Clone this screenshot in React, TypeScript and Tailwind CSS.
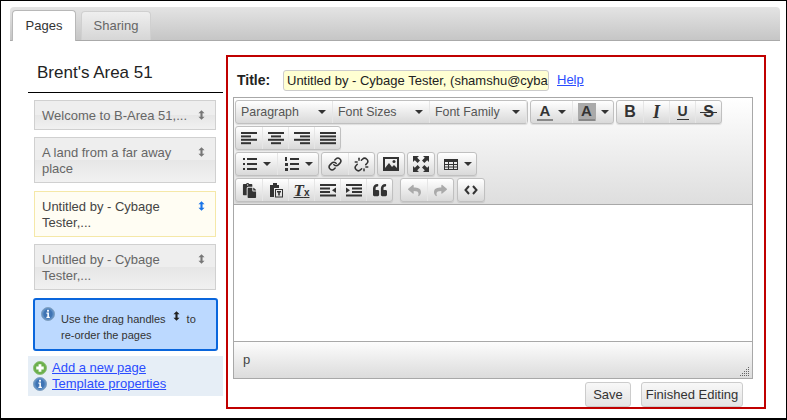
import React from "react";
import { FaPaste, FaQuoteLeft, FaReply, FaShare } from "react-icons/fa";
import { Link, Unlink } from "lucide-react";

const Handle = ({ color = "#777" }: { color?: string }) => (
  <svg width="7" height="10" viewBox="0 0 8 11" className="shrink-0">
    <path d="M4 0 L7.5 3.5 H5.2 V7.5 H7.5 L4 11 L0.5 7.5 H2.8 V3.5 H0.5 Z" fill={color} />
  </svg>
);

const Info = () => (
  <svg width="14" height="14" viewBox="0 0 15 15" className="shrink-0">
    <circle cx="7.5" cy="7.5" r="7" fill="#5f8fc4" stroke="#7f9fc0" />
    <circle cx="7.5" cy="7.5" r="5" fill="#3f74b4" />
    <rect x="6.5" y="3" width="2" height="2" fill="#fff" />
    <path d="M5.8 6 H8.5 V10.5 H9.5 V11.8 H5.8 V10.5 H6.8 V7.2 H5.8 Z" fill="#fff" />
  </svg>
);

const Add = () => (
  <svg width="14" height="14" viewBox="0 0 15 15" className="shrink-0">
    <circle cx="7.5" cy="7.5" r="7" fill="#6cb04c" stroke="#8fbf7a" />
    <path d="M6 3.5 H9 V6 H11.5 V9 H9 V11.5 H6 V9 H3.5 V6 H6 Z" fill="#fff" />
  </svg>
);

const Caret = () => (
  <svg width="8" height="4" viewBox="0 0 8 4" className="shrink-0">
    <path d="M0 0 H8 L4 4 Z" fill="#333" />
  </svg>
);

const I = ({ children }: { children: React.ReactNode }) => (
  <svg width="16" height="16" viewBox="0 0 16 16" fill="#333">{children}</svg>
);

const lines = (w: number[], align: "l" | "c" | "r") =>
  w.map((x, i) => (
    <rect key={i} x={align === "l" ? 0 : align === "r" ? 16 - x : (16 - x) / 2} y={2 + i * 3.4} width={x} height="2" />
  ));

const AlignL = () => <I>{lines([16, 10, 16, 10], "l")}</I>;
const AlignC = () => <I>{lines([16, 10, 16, 10], "c")}</I>;
const AlignR = () => <I>{lines([16, 10, 16, 10], "r")}</I>;
const AlignJ = () => <I>{lines([16, 16, 16, 16], "l")}</I>;

const Bullet = () => (
  <I>
    {[3, 8, 13].map((y) => (
      <g key={y}>
        <rect x="1" y={y - 1} width="2" height="2" />
        <rect x="5" y={y - 1} width="10" height="2" />
      </g>
    ))}
  </I>
);
const NumList = () => (
  <I>
    <rect x="1" y="1" width="2" height="4" />
    <rect x="1" y="7" width="3" height="3" />
    <rect x="1" y="12" width="3" height="3" />
    {[3, 8, 13].map((y) => (
      <rect key={y} x="6" y={y - 1} width="9" height="2" />
    ))}
  </I>
);
const Picture = () => (
  <I>
    <path fillRule="evenodd" d="M0 1 H16 V15 H0 Z M2 3 V12 L6 7 L9 11 L11 9 L14 12 V3 Z" />
    <circle cx="11" cy="5.5" r="1.5" />
  </I>
);
const Fullscreen = () => (
  <I>
    <path d="M0 0 H6 L4.2 1.8 L7 4.6 L4.6 7 L1.8 4.2 L0 6 Z" />
    <path d="M16 0 V6 L14.2 4.2 L11.4 7 L9 4.6 L11.8 1.8 L10 0 Z" />
    <path d="M0 16 V10 L1.8 11.8 L4.6 9 L7 11.4 L4.2 14.2 L6 16 Z" />
    <path d="M16 16 H10 L11.8 14.2 L9 11.4 L11.4 9 L14.2 11.8 L16 10 Z" />
  </I>
);
const TableI = () => (
  <I>
    <path fillRule="evenodd" d="M1 3 H15 V14 H1 Z M2 6 V8 H5 V6 Z M6 6 V8 H10 V6 Z M11 6 V8 H14 V6 Z M2 9 V10.5 H5 V9 Z M6 9 V10.5 H10 V9 Z M11 9 V10.5 H14 V9 Z M2 11.5 V13 H5 V11.5 Z M6 11.5 V13 H10 V11.5 Z M11 11.5 V13 H14 V11.5 Z" />
  </I>
);
const PasteText = () => (
  <I>
    <path d="M2 3 H5 V1 H9 V3 H11 V6 H6 V15 H2 Z" />
    <path fillRule="evenodd" d="M7 7 H15 V15.5 H7 Z M8 8 V14.5 H14 V8 Z" />
    <path d="M9 9 H13 V10.5 H11.8 V13.5 H10.2 V10.5 H9 Z" />
  </I>
);
const Outdent = () => (
  <I>
    <rect x="0" y="2" width="16" height="2" />
    <rect x="0" y="5.5" width="10" height="2" />
    <rect x="0" y="9" width="10" height="2" />
    <rect x="0" y="12.5" width="16" height="2" />
    <path d="M16 5.5 V11 L12 8.2 Z" />
  </I>
);
const Indent = () => (
  <I>
    <rect x="0" y="2" width="16" height="2" />
    <rect x="6" y="5.5" width="10" height="2" />
    <rect x="6" y="9" width="10" height="2" />
    <rect x="0" y="12.5" width="16" height="2" />
    <path d="M0 5.5 V11 L4 8.2 Z" />
  </I>
);
const CodeI = () => (
  <svg width="14" height="14" viewBox="0 0 14 14" fill="none" stroke="#333" strokeWidth="2">
    <path d="M5 3 L1.5 7 L5 11" />
    <path d="M9 3 L12.5 7 L9 11" />
  </svg>
);

const Btn = ({ children, first, w = "w-[26px]" }: { children: React.ReactNode; first?: boolean; w?: string }) => (
  <div className={`flex h-full ${w} items-center justify-center gap-[5px] ${first ? "" : "border-l border-[#e6e6e6]"}`}>{children}</div>
);

const Group = ({ children, className = "" }: { children: React.ReactNode; className?: string }) => (
  <div className={`flex h-[24px] rounded-[3px] border border-[#c0c0c0] bg-linear-to-b from-[#ffffff] to-[#d9d9d9] shadow-[0_1px_1px_rgba(0,0,0,0.1)] ${className}`}>
    {children}
  </div>
);

const Select = ({ label, w }: { label: string; w: string }) => (
  <div className={`flex h-full ${w} items-center justify-between border-r border-[#e6e6e6] pl-[5px] pr-[6px] text-[12.4px] text-[#555]`}>
    <span className="whitespace-nowrap">{label}</span>
    <Caret />
  </div>
);

const Letter = ({ children, className = "" }: { children: React.ReactNode; className?: string }) => (
  <span className={`text-[16px] leading-none font-bold text-[#333] ${className}`}>{children}</span>
);

const Item = ({ text, active }: { text: string; active?: boolean }) => (
  <div
    className={`flex justify-between border pt-[7px] pb-[5px] pl-[7px] pr-[10px] text-[13px] leading-[16px] ${
      active
        ? "border-[#f5e8a8] bg-[#fffdf3] text-[#444]"
        : "border-[#d0d0d0] bg-[linear-gradient(#eeeeee_50%,#e6e6e6_50%,#f1f1f1)] text-[#666]"
    }`}
  >
    <span className="w-[150px]">{text}</span>
    <span className="pt-[2px]">
      <Handle color={active ? "#1a75e8" : "#777"} />
    </span>
  </div>
);

export default function App() {
  return (
    <div className="h-[420px] w-[787px] overflow-hidden border border-b-2 border-black bg-white font-['Liberation_Sans',Arial,sans-serif]">
      <div className="ml-[9px] mt-[6px] flex h-[34px] w-[770px] items-end gap-[5px] rounded-t-[4px] border-b border-[#aaa] bg-linear-to-b from-[#e4e4e4] to-[#c6c6c6] pl-[2px]">
        <div className="-mb-px flex h-[31px] w-[64px] items-center justify-center rounded-t-[4px] border border-b-0 border-[#b8b8b8] bg-white text-[13px] text-[#333]">
          Pages
        </div>
        <div className="flex h-[29px] w-[70px] items-center justify-center rounded-t-[4px] border border-b-0 border-[#d0d0d0] bg-linear-to-b from-[#efefef] to-[#d6d6d6] text-[13px] text-[#666]">
          Sharing
        </div>
      </div>

      <div className="ml-[27px] mt-[15px] flex items-start gap-[3px]">
        <div className="w-[195px]">
          <div className="h-[37px] border-b border-black pl-[9px] pt-[6px] text-[17px] leading-[22px] text-[#222]">Brent's Area 51</div>
          <div className="ml-[6px] mt-[7px] flex w-[182px] flex-col gap-[7.33px]">
            <Item text="Welcome to B-Area 51,..." />
            <Item text="A land from a far away place" />
            <Item text="Untitled by - Cybage Tester,..." active />
            <Item text="Untitled by - Cybage Tester,..." />
          </div>
          <div className="ml-[5px] mt-[8px] flex h-[53px] w-[185px] gap-[6px] rounded-[3px] border-2 border-[#0a66dc] bg-[#bcd9ff] pl-[6px] pt-[7px] text-[11px] text-[#333]">
            <Info />
            <div className="pt-[4px] leading-[16px]">
              <div className="flex items-center">
                <span>Use the drag handles</span>
                <span className="mx-[7px] -mt-[5px]"><Handle color="#222" /></span>
                <span>to</span>
              </div>
              <div>re-order the pages</div>
            </div>
          </div>
          <div className="mt-[5px] flex h-[40px] flex-col justify-center bg-[#e6eef6] pl-[5px] text-[13px] leading-[16px] text-[#2a4cff]">
            <div className="flex items-center gap-[5px]"><Add /><span className="underline">Add a new page</span></div>
            <div className="flex items-center gap-[5px]"><Info /><span className="underline">Template properties</span></div>
          </div>
        </div>

        <div className="-mt-[1px] h-[354px] w-[540px] border-2 border-[#c00000] pl-[5px] pr-[11px] pt-[12px]">
          <div className="flex h-[22px] items-center">
            <span className="ml-[4px] w-[46px] text-[14px] font-bold text-[#222]">Title:</span>
            <div className="h-[21px] w-[266px] overflow-hidden whitespace-nowrap rounded-[3px] border border-[#ccc] bg-[#ffffd2] pl-[3px] text-[13px] leading-[19px] text-[#222]">
              Untitled by - Cybage Tester, (shamshu@cyba
            </div>
            <span className="ml-[8px] text-[13px] text-[#2a4cff] underline">Help</span>
          </div>

          <div className="mt-[6px] w-[520px] border border-[#a8a8a8]">
            <div className="flex h-[107px] flex-col gap-[2px] border-b border-[#a8a8a8] bg-linear-to-b from-[#ffffff] to-[#dedede] pl-[1px] pt-[2px]">
              <div className="flex gap-[2px]">
                <Group>
                  <Select label="Paragraph" w="w-[97px]" />
                  <Select label="Font Sizes" w="w-[97px]" />
                  <Select label="Font Family" w="w-[97px]" />
                </Group>
                <Group>
                  <Btn first w="w-[41px]">
                    <span className="flex flex-col items-center">
                      <span className="text-[15px] leading-none font-bold text-[#333]">A</span>
                      <span className="mt-[1px] h-[2px] w-[16px] bg-[#888]" />
                    </span>
                    <Caret />
                  </Btn>
                  <Btn w="w-[41px]">
                    <span className="flex flex-col items-center bg-[#aaa] px-[1px]">
                      <span className="text-[15px] leading-none font-bold text-[#333]">A</span>
                      <span className="mt-[1px] h-[2px] w-[16px] bg-[#888]" />
                    </span>
                    <Caret />
                  </Btn>
                </Group>
                <Group>
                  <Btn first><Letter>B</Letter></Btn>
                  <Btn><Letter className="font-['Liberation_Serif',serif] text-[18px] italic">I</Letter></Btn>
                  <Btn>
                    <span className="flex flex-col items-center">
                      <span className="text-[14px] leading-none font-bold text-[#333]">U</span>
                      <span className="mt-[1px] h-[1px] w-[12px] bg-[#333]" />
                    </span>
                  </Btn>
                  <Btn>
                    <span className="relative flex items-center justify-center">
                      <span className="text-[16px] leading-none font-bold text-[#333]">S</span>
                      <span className="absolute left-[-3px] right-[-3px] top-[8px] h-[1px] bg-[#333]" />
                    </span>
                  </Btn>
                </Group>
              </div>
              <div className="flex gap-[2px]">
                <Group>
                  <Btn first><AlignL /></Btn>
                  <Btn><AlignC /></Btn>
                  <Btn><AlignR /></Btn>
                  <Btn><AlignJ /></Btn>
                </Group>
              </div>
              <div className="flex gap-[2px]">
                <Group>
                  <Btn first w="w-[41px]"><Bullet /><Caret /></Btn>
                  <Btn w="w-[41px]"><NumList /><Caret /></Btn>
                </Group>
                <Group>
                  <Btn first><Link size={14} color="#333" strokeWidth={2.6} /></Btn>
                  <Btn><Unlink size={15} color="#333" strokeWidth={2.4} /></Btn>
                </Group>
                <Group><Btn first><Picture /></Btn></Group>
                <Group><Btn first><Fullscreen /></Btn></Group>
                <Group><Btn first w="w-[38px]"><TableI /><Caret /></Btn></Group>
              </div>
              <div className="flex">
                <Group>
                  <Btn first><FaPaste size={15} color="#333" /></Btn>
                  <Btn><PasteText /></Btn>
                  <Btn>
                    <span className="font-['Liberation_Serif',serif] text-[17px] leading-none font-bold italic text-[#333] underline">T<span className="font-['Liberation_Sans',sans-serif] text-[10px] not-italic">x</span></span>
                  </Btn>
                  <Btn><Outdent /></Btn>
                  <Btn><Indent /></Btn>
                  <Btn><FaQuoteLeft size={14} color="#333" /></Btn>
                </Group>
                <Group className="ml-[7px]">
                  <Btn first><FaReply size={13} color="#aaa" /></Btn>
                  <Btn><FaShare size={13} color="#aaa" /></Btn>
                </Group>
                <Group className="ml-[3px]">
                  <Btn first><CodeI /></Btn>
                </Group>
              </div>
            </div>
            <div className="h-[136px] bg-white" />
            <div className="relative h-[37px] border-t border-[#a8a8a8] bg-linear-to-b from-[#fcfcfc] to-[#dcdcdc] pl-[9px] pt-[10px] text-[13px] leading-[16px] text-[#444]">
              p
              <svg width="10" height="10" viewBox="0 0 10 10" className="absolute bottom-[1px] right-[2px]" fill="#666">
                {[[8,0],[6,2],[8,2],[4,4],[6,4],[8,4],[2,6],[4,6],[6,6],[8,6],[0,8],[2,8],[4,8],[6,8],[8,8]].map(([x, y]) => (
                  <rect key={`${x}-${y}`} x={x} y={y} width="1" height="1" />
                ))}
              </svg>
            </div>
          </div>

          <div className="mt-[3px] flex w-[510px] justify-end gap-[10px]">
            <div className="flex h-[25px] w-[46px] items-center justify-center rounded-[3px] border border-[#ccc] bg-linear-to-b from-[#f8f8f8] to-[#e4e4e4] text-[13px] text-[#333]">Save</div>
            <div className="flex h-[25px] w-[102px] items-center justify-center rounded-[3px] border border-[#ccc] bg-linear-to-b from-[#f8f8f8] to-[#e4e4e4] text-[13px] text-[#333]">Finished Editing</div>
          </div>
        </div>
      </div>
    </div>
  );
}
